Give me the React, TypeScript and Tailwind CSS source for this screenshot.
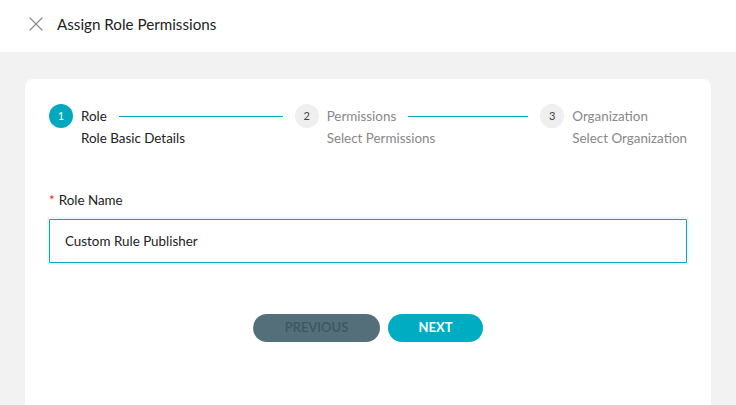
import { X } from "lucide-react";

const steps = [
  { n: 1, title: "Role", sub: "Role Basic Details", active: true },
  { n: 2, title: "Permissions", sub: "Select Permissions", active: false },
  { n: 3, title: "Organization", sub: "Select Organization", active: false },
];

export default function App() {
  return (
    <div
      className="h-[405px] w-full overflow-hidden bg-[#f2f2f2] text-[#222]"
      style={{ fontFamily: "Lato, 'Open Sans', sans-serif" }}
    >
      <header className="flex h-[52px] items-center gap-[9px] bg-white pb-[4px] pl-[24px]">
        <X className="h-[24px] w-[24px] text-[#8a8a8a]" strokeWidth={1.2} />
        <h1 className="text-[15.2px] text-[#222]">Assign Role Permissions</h1>
      </header>

      <div className="px-[25px] pt-[27px]">
        <div className="h-[400px] rounded-t-[8px] bg-white px-[24px] pt-[25px]">
          <div className="flex items-start">
            {steps.map((s, i) => {
              const last = i === steps.length - 1;
              const tone = s.active ? "text-[#222]" : "text-[#888]";
              return (
                <div key={s.n} className={`flex items-start ${last ? "flex-none" : "flex-1"}`}>
                  <div
                    className={`flex h-[24px] w-[24px] shrink-0 items-center justify-center rounded-full text-[11px] ${
                      s.active ? "bg-[#00a9bd] text-white" : "bg-[#efefef] text-[#444]"
                    }`}
                  >
                    {s.n}
                  </div>
                  <div className="ml-[8px] flex flex-1 flex-col">
                    <div className="flex items-center">
                      <span className={`text-[13.4px] leading-[24px] ${tone}`}>{s.title}</span>
                      {!last && <div className="mx-[12px] h-px flex-1 bg-[#00a9bd]" />}
                    </div>
                    <span className={`whitespace-nowrap text-[13.4px] leading-[20px] ${tone}`}>{s.sub}</span>
                  </div>
                </div>
              );
            })}
          </div>

          <div className="mt-[42px]">
            <label className="block text-[13.4px] leading-[20px] text-[#222]">
              <span className="mr-[4px] text-[#f5222d]">*</span>Role Name
            </label>
            <div className="mt-[9px] h-[44px] rounded-[1px] border border-[#00a9bd] shadow-[0_0_0_2px_rgba(0,169,189,0.08)]">
              <input
                defaultValue="Custom Rule Publisher"
                className="h-full w-full bg-transparent px-[15px] text-[13.4px] text-[#222] outline-none"
              />
            </div>
          </div>

          <div className="mt-[51px] flex justify-center gap-[8px]">
            <button className="h-[28px] w-[127px] rounded-full bg-[#546e7a] text-[13px] font-semibold text-[#3f5560]">
              PREVIOUS
            </button>
            <button className="h-[28px] w-[95px] rounded-full bg-[#00acc1] text-[13px] font-bold text-white">
              NEXT
            </button>
          </div>
        </div>
      </div>
    </div>
  );
}
